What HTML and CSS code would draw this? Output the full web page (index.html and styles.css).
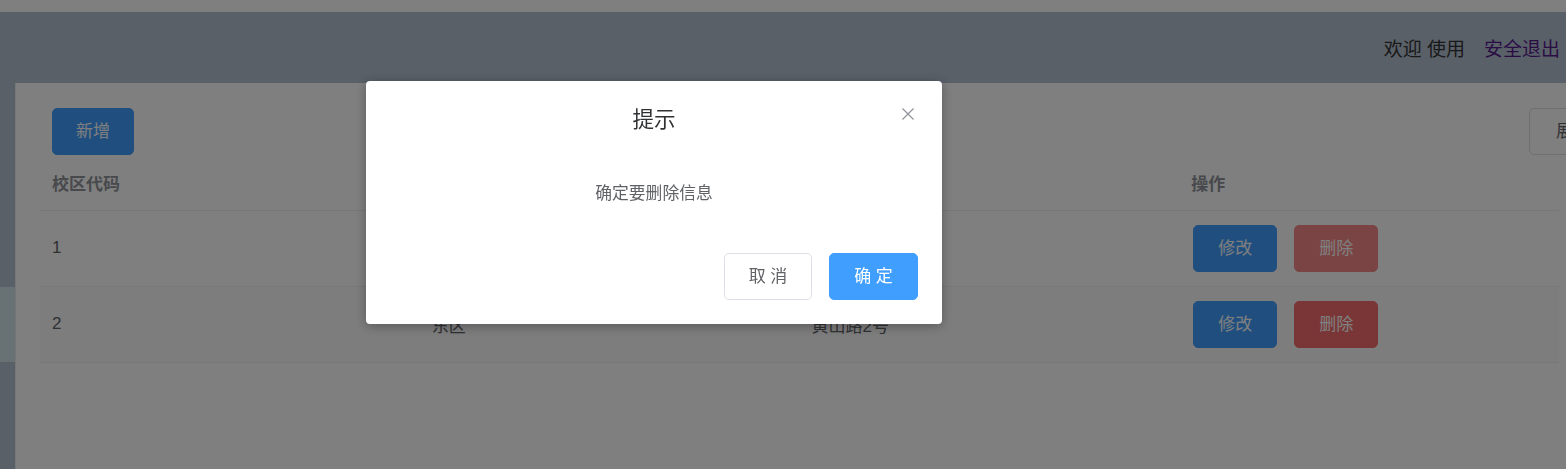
FILE: index.html
```html
<!DOCTYPE html>
<html lang="zh-CN">
<head>
<meta charset="utf-8">
<title>校区管理</title>
<link rel="stylesheet" href="styles.css">
</head>
<body>
<div class="page">
  <header class="topbar">
    <span class="welcome">欢迎 使用</span>
    <a class="logout" href="#">安全退出</a>
  </header>
  <div class="layout">
    <aside class="aside">
      <div class="aside-item"></div>
    </aside>
    <main class="main">
      <div class="toolbar">
        <button class="btn btn-primary">新增</button>
        <button class="btn btn-default btn-right">展开</button>
      </div>
      <table class="table">
        <thead>
          <tr><th>校区代码</th><th>校区名称</th><th>校区地址</th><th>操作</th></tr>
        </thead>
        <tbody>
          <tr>
            <td>1</td><td>西区</td><td>黄山路1号</td>
            <td><div class="ops"><button class="btn btn-primary">修改</button><button class="btn btn-danger-hover">删除</button></div></td>
          </tr>
          <tr class="striped">
            <td>2</td><td>东区</td><td>黄山路2号</td>
            <td><div class="ops"><button class="btn btn-primary">修改</button><button class="btn btn-danger">删除</button></div></td>
          </tr>
        </tbody>
      </table>
    </main>
  </div>
</div>
<div class="overlay">
  <div class="dialog">
    <div class="dialog-header">
      <span class="dialog-title">提示</span>
      <button class="dialog-close" aria-label="关闭">
        <svg width="12" height="12" viewBox="0 0 12 12"><path d="M0.5 0.5 L11.5 11.5 M11.5 0.5 L0.5 11.5" stroke="#909399" stroke-width="1.2" fill="none"/></svg>
      </button>
    </div>
    <div class="dialog-body">确定要删除信息</div>
    <div class="dialog-footer">
      <button class="btn btn-default">取 消</button>
      <button class="btn btn-confirm">确 定</button>
    </div>
  </div>
</div>
</body>
</html>
```
FILE: styles.css
```css
* { box-sizing: border-box; }
html, body { margin: 0; padding: 0; }
body {
  width: 1566px;
  height: 469px;
  overflow: hidden;
  font-family: "Liberation Sans", "Noto Sans CJK SC", sans-serif;
  background: #ffffff;
  position: relative;
}
.page { padding-top: 12px; }
.topbar {
  height: 71px;
  background: #b3c0d1;
  display: flex;
  align-items: center;
  justify-content: flex-end;
  padding-right: 6px;
  font-size: 19px;
  color: #333333;
}
.welcome { margin-right: 19px; margin-left: -1px; }
.logout { color: #551a8b; text-decoration: none; }
.layout { display: flex; height: 386px; }
.aside {
  width: 16px;
  flex: 0 0 16px;
  background: #b3c0d1;
  border-right: 1px solid #ececec;
  padding-top: 204px;
}
.aside-item { height: 75px; background: #d1e4ea; }
.main {
  flex: 1;
  min-width: 0;
  background: #ffffff;
  padding: 25px 7px 0 24px;
}
.toolbar {
  display: flex;
  align-items: center;
  padding-left: 12px;
  margin-right: -58px;
}
.btn-right { margin-left: auto; width: 88px; }
.btn {
  height: 47px;
  padding: 0 23px;
  font-family: inherit;
  font-size: 17px;
  border-radius: 5px;
  border: 1px solid transparent;
  line-height: 1;
  cursor: pointer;
  white-space: nowrap;
}
.btn-primary { background: #409eff; border-color: #409eff; color: #ffffff; }
.btn-danger { background: #f56c6c; border-color: #f56c6c; color: #ffffff; }
.btn-danger-hover { background: #f78989; border-color: #f78989; color: #ffffff; }
.btn-default { background: #ffffff; border-color: #dcdfe6; color: #606266; }
.btn-confirm { background: #409eff; border-color: #409eff; color: #ffffff; }
.table {
  width: 100%;
  border-collapse: collapse;
  table-layout: fixed;
  font-size: 17px;
}
.table th {
  height: 55px;
  padding: 0 12px;
  text-align: left;
  font-weight: bold;
  color: #909399;
  border-bottom: 1px solid #ebeef5;
}
.table td {
  height: 76px;
  padding: 0 12px;
  color: #606266;
  border-bottom: 1px solid #ebeef5;
}
.table .striped td { background: #fafafa; }
.ops { display: flex; gap: 17px; padding-left: 2px; }
.ops .btn { width: 84px; padding: 0; }
.overlay {
  position: fixed;
  inset: 0;
  background: rgba(0, 0, 0, 0.5);
  padding: 81px 0 0 366px;
}
.dialog {
  width: 576px;
  background: #ffffff;
  border-radius: 4px;
  box-shadow: 0 2px 12px rgba(0, 0, 0, 0.3);
}
.dialog-header {
  position: relative;
  padding: 24px 24px 12px;
  text-align: center;
}
.dialog-title {
  font-size: 21.6px;
  line-height: 29px;
  color: #303133;
}
.dialog-close {
  position: absolute;
  top: 27px;
  right: 28px;
  width: 12px;
  height: 12px;
  padding: 0;
  border: 0;
  background: none;
  display: flex;
}
.dialog-body {
  padding: 35px 24px;
  text-align: center;
  font-size: 16.8px;
  line-height: 25px;
  color: #606266;
}
.dialog-footer {
  display: flex;
  justify-content: flex-end;
  gap: 17px;
  padding: 12px 24px 24px;
}
.dialog-footer .btn { width: 88px; padding: 0; }
.dialog-footer .btn-confirm { width: 89px; }
```
